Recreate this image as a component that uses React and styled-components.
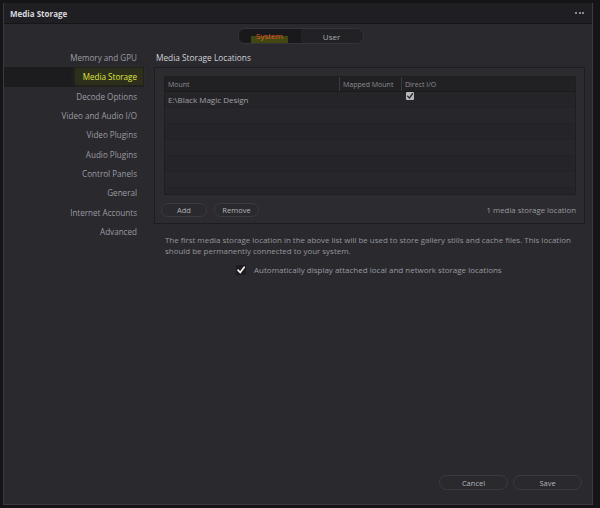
import React from "react";
import styled, { createGlobalStyle } from "styled-components";

const GlobalStyle = createGlobalStyle`
  html, body {
    margin: 0;
    padding: 0;
    background: #151517;
  }
  body {
    width: 600px;
    height: 508px;
    overflow: hidden;
    font-family: "Open Sans", "DejaVu Sans", sans-serif;
  }
`;

const Frame = styled.div`
  box-sizing: border-box;
  width: 600px;
  height: 508px;
  padding: 3px 7px 3px 3px;
`;

const Window = styled.div`
  box-sizing: border-box;
  height: 100%;
  display: flex;
  flex-direction: column;
  background: #29292e;
  border: 1px solid #3a3a40;
  border-top: none;
`;

const TitleBar = styled.div`
  height: 20px;
  flex: none;
  display: flex;
  align-items: center;
  justify-content: space-between;
  padding: 0 8px 0 6px;
  background: #1f1f23;
  border-bottom: 1px solid #161618;
`;

const Title = styled.div`
  font-size: 8px;
  font-weight: 700;
  color: #d8d8dc;
`;

const Dots = styled.div`
  display: flex;
  gap: 1.5px;
  span {
    width: 2px;
    height: 2px;
    background: #8a8a90;
  }
`;

const TabRow = styled.div`
  display: flex;
  justify-content: center;
  padding: 4px 0 0;
`;

const Segment = styled.div`
  display: flex;
  width: 124px;
  height: 14px;
  border-radius: 7px;
  border: 1px solid #34343a;
  background: #222226;
  overflow: hidden;
  margin-left: 5px;
`;

const Tab = styled.div`
  flex: 1;
  display: flex;
  align-items: center;
  justify-content: center;
  font-size: 8px;
  color: ${(p) => (p.$active ? "#e0572a" : "#a8a8ae")};
  background: ${(p) => (p.$active ? "#19191c" : "transparent")};
`;

const Marker = styled.span`
  padding: 0 5px 2px;
  background: linear-gradient(to bottom, transparent 50%, rgba(100, 110, 10, 0.55) 50%);
`;

const Main = styled.div`
  display: grid;
  grid-template-columns: 140px 1fr;
  column-gap: 10px;
  padding-top: 4px;
  flex: 1;
`;

const Sidebar = styled.div`
  display: flex;
  flex-direction: column;
`;

const NavItem = styled.div`
  height: 19.3px;
  display: flex;
  align-items: center;
  justify-content: flex-end;
  padding-right: 7px;
  font-size: 8.1px;
  color: ${(p) => (p.$active ? "#dfe63c" : "#9c9ca2")};
  background: ${(p) => (p.$active ? "#1c1c1f" : "transparent")};
`;

const NavMark = styled.span`
  padding: 3px 6px 3px 8px;
  margin-right: -6px;
  background: rgba(90, 96, 20, 0.28);
  box-shadow: 0 0 6px rgba(90, 96, 20, 0.25);
`;

const Content = styled.div`
  display: flex;
  flex-direction: column;
  padding-right: 7px;
`;

const Heading = styled.div`
  height: 19px;
  display: flex;
  align-items: center;
  padding-left: 2px;
  font-size: 8.3px;
  color: #d2d2d6;
`;

const Panel = styled.div`
  box-sizing: border-box;
  height: 157px;
  padding: 8px 8px 0 9px;
  background: #2b2b30;
  border: 1px solid #1d1d20;
  display: flex;
  flex-direction: column;
`;

const Table = styled.div`
  box-sizing: border-box;
  height: 119px;
  background: #252529;
  border: 1px solid #1f1f22;
  display: flex;
  flex-direction: column;
  overflow: hidden;
`;

const HeadRow = styled.div`
  display: grid;
  grid-template-columns: 174px 62px 1fr;
  height: 14px;
  background: #212124;
  border-bottom: 1px solid #1a1a1d;
  flex: none;
`;

const HeadCell = styled.div`
  display: flex;
  align-items: center;
  padding-left: 3px;
  font-size: 7px;
  color: #8c8c92;
  border-left: ${(p) => (p.$first ? "none" : "1px solid #3a3a40")};
`;

const Row = styled.div`
  display: grid;
  grid-template-columns: 174px 62px 1fr;
  height: 15px;
  flex: none;
  background: ${(p) => (p.$odd ? "#27272b" : "#252529")};
  border-bottom: 1px solid #222226;
`;

const Cell = styled.div`
  display: flex;
  align-items: ${(p) => (p.$top ? "flex-start" : "center")};
  padding: ${(p) => (p.$top ? "0 0 0 5px" : "0 0 0 3px")};
  font-size: 8px;
  color: #a0a0a6;
`;

const SmallCheck = styled.div`
  width: 8px;
  height: 8px;
  background: #b8b8bc;
  border-radius: 1px;
  display: flex;
  align-items: center;
  justify-content: center;
`;

const ButtonRow = styled.div`
  display: flex;
  align-items: center;
  gap: 7px;
  height: 14px;
  margin-top: 8px;
  margin-left: -3px;
`;

const Pill = styled.button`
  box-sizing: border-box;
  width: ${(p) => p.$w}px;
  height: ${(p) => p.$h || 14}px;
  border-radius: 8px;
  border: 1px solid #3a3a40;
  background: #29292e;
  color: #b4b4ba;
  font-family: "Open Sans", "DejaVu Sans", sans-serif;
  font-size: 7.5px;
  padding: 0;
  display: flex;
  align-items: center;
  justify-content: center;
`;

const Count = styled.div`
  margin-left: auto;
  font-size: 7.8px;
  color: #9a9aa0;
`;

const Note = styled.p`
  margin: 11px 0 0 11px;
  font-size: 7.95px;
  line-height: 11px;
  color: #96969c;
  white-space: nowrap;
`;

const CheckLine = styled.div`
  display: flex;
  align-items: center;
  gap: 8px;
  margin: 7px 0 0 82px;
  font-size: 8px;
  color: #9a9aa0;
`;

const BigCheck = styled.div`
  width: 10px;
  height: 10px;
  background: #1c1c1f;
  border-radius: 1px;
  display: flex;
  align-items: center;
  justify-content: center;
`;

const Footer = styled.div`
  margin-top: auto;
  display: flex;
  justify-content: flex-end;
  gap: 5px;
  padding: 0 10px 14px 0;
`;

const Check = ({ size, color, width }) => (
  <svg width={size} height={size} viewBox="0 0 10 10">
    <path d="M2 5.2 L4.2 7.5 L8.2 2.2" fill="none" stroke={color} strokeWidth={width} strokeLinecap="round" strokeLinejoin="round" />
  </svg>
);

const navItems = [
  "Memory and GPU",
  "Media Storage",
  "Decode Options",
  "Video and Audio I/O",
  "Video Plugins",
  "Audio Plugins",
  "Control Panels",
  "General",
  "Internet Accounts",
  "Advanced",
];

export default function App() {
  const rows = [0, 1, 2, 3, 4, 5];
  return (
    <Frame>
      <GlobalStyle />
      <Window>
        <TitleBar>
          <Title>Media Storage</Title>
          <Dots>
            <span />
            <span />
            <span />
          </Dots>
        </TitleBar>
        <TabRow>
          <Segment>
            <Tab $active>
              <Marker>System</Marker>
            </Tab>
            <Tab>User</Tab>
          </Segment>
        </TabRow>
        <Main>
          <Sidebar>
            {navItems.map((item) => (
              <NavItem key={item} $active={item === "Media Storage"}>
                {item === "Media Storage" ? <NavMark>{item}</NavMark> : item}
              </NavItem>
            ))}
          </Sidebar>
          <Content>
            <Heading>Media Storage Locations</Heading>
            <Panel>
              <Table>
                <HeadRow>
                  <HeadCell $first>Mount</HeadCell>
                  <HeadCell>Mapped Mount</HeadCell>
                  <HeadCell>Direct I/O</HeadCell>
                </HeadRow>
                <Row>
                  <Cell>E:\Black Magic Design</Cell>
                  <Cell />
                  <Cell $top>
                    <SmallCheck>
                      <Check size={8} color="#2a2a2e" width={1.6} />
                    </SmallCheck>
                  </Cell>
                </Row>
                {rows.map((r) => (
                  <Row key={r} $odd={r % 2 === 0} />
                ))}
              </Table>
              <ButtonRow>
                <Pill $w={46}>Add</Pill>
                <Pill $w={45}>Remove</Pill>
                <Count>1 media storage location</Count>
              </ButtonRow>
            </Panel>
            <Note>
              The first media storage location in the above list will be used to store gallery stills and cache files. This location
              <br />
              should be permanently connected to your system.
            </Note>
            <CheckLine>
              <BigCheck>
                <Check size={10} color="#f2f2f2" width={1.8} />
              </BigCheck>
              Automatically display attached local and network storage locations
            </CheckLine>
          </Content>
        </Main>
        <Footer>
          <Pill $w={69} $h={15}>Cancel</Pill>
          <Pill $w={69} $h={15}>Save</Pill>
        </Footer>
      </Window>
    </Frame>
  );
}
